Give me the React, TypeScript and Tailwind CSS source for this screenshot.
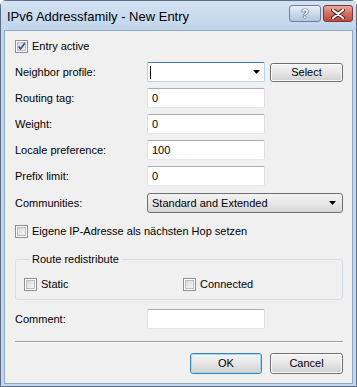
import React from "react";

const font = "font-['Liberation_Sans',Arial,sans-serif]";

function CheckBox({ checked }: { checked?: boolean }) {
  return (
    <span className="flex h-[13px] w-[13px] shrink-0 items-center justify-center border border-[#8e8f8f] bg-white">
      <span className="relative flex h-[9px] w-[9px] items-center justify-center border border-[#b9bdc3] bg-gradient-to-br from-[#d4d8de] to-[#f7f7f7]">
        {checked && (
          <svg width="9" height="9" viewBox="0 0 9 9" className="absolute -left-px -top-px">
            <path d="M1.5 4.5 L3.6 6.8 L7.8 1.2" fill="none" stroke="#3a57a6" strokeWidth="1.8" />
          </svg>
        )}
      </span>
    </span>
  );
}

function TextBox({ value, w = "w-[118px]" }: { value?: string; w?: string }) {
  return (
    <div
      className={`${w} flex h-[20px] items-center rounded-[2px] border border-[#abadb3] border-x-[#dbdfe6] border-b-[#e3e9ef] bg-white pl-[4px] text-[11px] text-black`}
    >
      {value}
    </div>
  );
}

function Arrow() {
  return (
    <svg width="7" height="4" viewBox="0 0 7 4">
      <path d="M0 0 H7 L3.5 4 Z" fill="#000" />
    </svg>
  );
}

function Button({ label, primary, w = "w-[72px]", h = "h-[21px]" }: { label: string; primary?: boolean; w?: string; h?: string }) {
  return (
    <div
      className={`${w} ${h} rounded-[3px] border ${primary ? "border-[#3c7fb1]" : "border-[#707070]"}`}
    >
      <div
        className={`flex h-full w-full items-center justify-center rounded-[2px] border ${
          primary ? "border-[#9fdcf6]" : "border-[#fbfbfb]"
        } bg-gradient-to-b from-[#f3f3f3] via-[#e6e6e6] to-[#d3d3d3] text-[11px] text-black`}
      >
        {label}
      </div>
    </div>
  );
}

function Row({ label, children, mt = "mt-[6px]" }: { label: string; children: React.ReactNode; mt?: string }) {
  return (
    <div className={`${mt} flex h-[20px] items-center`}>
      <span className="w-[132px] text-[11px] text-black">{label}</span>
      {children}
    </div>
  );
}

export default function App() {
  return (
    <div className={`${font} h-[387px] w-[357px] overflow-hidden bg-white`}>
      <div className="flex h-[387px] w-[357px] flex-col rounded-t-[6px] border border-[#5b6e86] bg-[#c3d6ec]">
        {/* Title bar */}
        <div className="flex h-[29px] items-start bg-gradient-to-b from-[#d3e2f3] to-[#c1d5eb]">
          <span className="ml-[6px] mt-[6px] text-[13px] text-black">IPv6 Addressfamily - New Entry</span>
          <div className="ml-auto mr-[3px] mt-[4px] flex gap-[2px]">
            <div className="flex h-[17px] w-[32px] items-center justify-center rounded-[3px] border border-[#6d7f99] bg-gradient-to-b from-[#e9f0f8] via-[#cbd9ea] to-[#b3c7df]">
              <span className="text-[12px] font-bold leading-none text-white [text-shadow:0_0_1px_#2b3f5a,0_0_1px_#2b3f5a,0_0_1px_#2b3f5a]">
                ?
              </span>
            </div>
            <div className="flex h-[17px] w-[30px] items-center justify-center rounded-[3px] border border-[#7a3a34] bg-gradient-to-b from-[#e9a89d] via-[#d16f60] to-[#c3493a]">
              <svg width="14" height="10" viewBox="0 0 14 10">
                <path d="M2 1 L12 9 M12 1 L2 9" stroke="#4b1f1a" strokeWidth="4" strokeLinecap="round" />
                <path d="M2 1 L12 9 M12 1 L2 9" stroke="#fff" strokeWidth="2.2" strokeLinecap="round" />
              </svg>
            </div>
          </div>
        </div>

        {/* Client area */}
        <div className="mx-[3px] flex h-[354px] flex-col border border-[#8fa8c6] bg-[#f0f0f0] pl-[10px]">
          <div className="mt-[5px] flex h-[20px] items-center gap-[4px]">
            <CheckBox checked />
            <span className="text-[11px] text-black">Entry active</span>
          </div>

          <Row label="Neighbor profile:">
            <div className="flex h-[20px] w-[118px] items-center rounded-[2px] border border-[#b6d3ea] border-t-[#3d7bad] bg-white pl-[2px] pr-[4px]">
              <span className="h-[13px] w-px bg-black" />
              <span className="ml-auto">
                <Arrow />
              </span>
            </div>
            <div className="ml-[5px]">
              <Button label="Select" w="w-[73px]" h="h-[19px]" />
            </div>
          </Row>

          <Row label="Routing tag:">
            <TextBox value="0" />
          </Row>
          <Row label="Weight:">
            <TextBox value="0" />
          </Row>
          <Row label="Locale preference:">
            <TextBox value="100" />
          </Row>
          <Row label="Prefix limit:">
            <TextBox value="0" />
          </Row>

          <Row label="Communities:" mt="mt-[7px]">
            <div className="flex h-[20px] w-[196px] items-center rounded-[3px] border border-[#707070] bg-gradient-to-b from-[#f2f2f2] via-[#e8e8e8] to-[#d6d6d6] pl-[4px] pr-[6px] text-[11px] text-black">
              Standard and Extended
              <span className="ml-auto">
                <Arrow />
              </span>
            </div>
          </Row>

          <div className="mt-[8px] flex h-[20px] items-center gap-[4px]">
            <CheckBox />
            <span className="text-[11px] text-black">Eigene IP-Adresse als nächsten Hop setzen</span>
          </div>

          <fieldset className="mt-[12px] w-[328px] rounded-[3px] border border-[#d5dfe5] pb-[8px] pl-[8px]">
            <legend className="ml-[5px] px-[3px] text-[11px] leading-[13px] text-black">Route redistribute</legend>
            <div className="mt-[11px] flex h-[14px] items-center">
              <div className="flex w-[159px] items-center gap-[4px]">
                <CheckBox />
                <span className="text-[11px] text-black">Static</span>
              </div>
              <div className="flex items-center gap-[4px]">
                <CheckBox />
                <span className="text-[11px] text-black">Connected</span>
              </div>
            </div>
          </fieldset>

          <Row label="Comment:" mt="mt-[9px]">
            <TextBox />
          </Row>

          <div className="mt-[12px] w-[328px] border-t border-b border-t-[#a0a0a0] border-b-white" />

          <div className="mt-[10px] flex w-[328px] justify-end gap-[8px]">
            <Button label="OK" primary w="w-[72px]" />
            <Button label="Cancel" w="w-[73px]" />
          </div>
        </div>
      </div>
    </div>
  );
}
